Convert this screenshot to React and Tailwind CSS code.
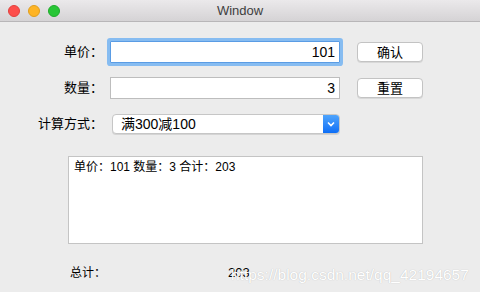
export default function App() {
  const font = { fontFamily: '"Liberation Sans", "Noto Sans CJK SC", sans-serif' };
  return (
    <div
      className="w-[480px] h-[292px] bg-[#ececec] flex flex-col overflow-hidden text-black"
      style={font}
    >
      {/* Title bar */}
      <div className="h-[22px] shrink-0 relative flex items-center justify-center bg-gradient-to-b from-[#ebe9eb] to-[#d5d3d5] border-b border-[#b8b6b8]">
        <div className="absolute left-[8px] top-[5px] flex gap-[8px]">
          <span className="w-[12px] h-[12px] rounded-full bg-[#fd4e4b] border border-[#e2403d]" />
          <span className="w-[12px] h-[12px] rounded-full bg-[#feb425] border border-[#e09e1d]" />
          <span className="w-[12px] h-[12px] rounded-full bg-[#28c636] border border-[#1fab2b]" />
        </div>
        <span className="text-[13px] text-[#3e3e3e] leading-none">Window</span>
      </div>

      {/* Form */}
      <div className="flex flex-col pt-[19px] pl-[20px]">
        <div className="flex items-center h-[22px]">
          <span className="w-[83px] text-right text-[13px]">单价：</span>
          <input
            readOnly
            value="101"
            className="ml-[7px] w-[230px] h-[22px] bg-white border border-[#5a9ce4] ring-[3px] ring-[#86bcf1] rounded-[1px] text-right pr-[4px] text-[14px] outline-none"
          />
          <button className="ml-[17px] w-[66px] h-[20px] bg-white border border-[#c3c3c3] rounded-[4px] text-[13px] leading-none shadow-[0_1px_0_#d8d8d8]">
            确认
          </button>
        </div>

        <div className="flex items-center h-[22px] mt-[14px]">
          <span className="w-[83px] text-right text-[13px]">数量：</span>
          <input
            readOnly
            value="3"
            className="ml-[7px] w-[230px] h-[22px] bg-white border border-[#bdbdbd] text-right pr-[4px] text-[14px] outline-none"
          />
          <button className="ml-[17px] w-[66px] h-[20px] bg-white border border-[#c3c3c3] rounded-[4px] text-[13px] leading-none shadow-[0_1px_0_#d8d8d8]">
            重置
          </button>
        </div>

        <div className="flex items-center h-[20px] mt-[15px]">
          <span className="w-[83px] text-right text-[13px]">计算方式：</span>
          <div className="ml-[9px] w-[228px] h-[20px] flex bg-white border border-[#c6c6c6] rounded-[4px] overflow-hidden shadow-[0_1px_0_#d4d4d4]">
            <span className="flex-1 pl-[8px] text-[14px] leading-[18px]">满300减100</span>
            <span className="w-[16px] h-full bg-gradient-to-b from-[#4ea4fc] to-[#0b6ef6] flex items-center justify-center">
              <svg width="8" height="6" viewBox="0 0 8 6">
                <path d="M1 1.5 L4 4.5 L7 1.5" stroke="white" strokeWidth="1.6" fill="none" />
              </svg>
            </span>
          </div>
        </div>

        <div className="ml-[48px] mt-[22px] w-[355px] h-[88px] bg-white border border-[#c4c4c4] px-[5px] pt-[3px] text-[12px] leading-[14px]">
          单价：101 数量：3 合计：203
        </div>

        <div className="relative flex items-center h-[20px] mt-[19px]">
          <span className="ml-[50px] text-[12px]">总计：</span>
          <span className="absolute left-[208px] text-[13px]">203</span>
          <span className="absolute left-[211px] top-[0px] text-[15.5px] text-white whitespace-nowrap [text-shadow:0_0_1px_rgba(0,0,0,0.25)]">
            https://blog.csdn.net/qq_42194657
          </span>
        </div>
      </div>
    </div>
  );
}
